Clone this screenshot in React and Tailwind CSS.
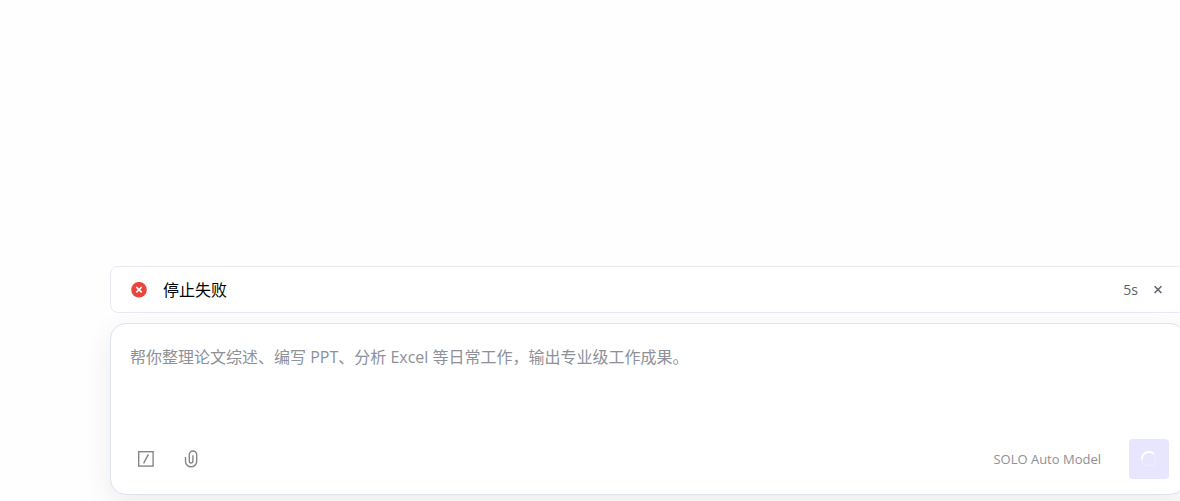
import { useState } from "react";

function ErrorIcon() {
  return (
    <svg viewBox="0 0 16 16" className="size-4" aria-hidden="true">
      <circle cx="8" cy="7.7" r="7.8" fill="#E8453C" />
      <path
        d="M5.3 5l5.4 5.4M10.7 5l-5.4 5.4"
        stroke="#fff"
        strokeWidth="1.7"
      />
    </svg>
  );
}

function CloseIcon() {
  return (
    <svg viewBox="0 0 16 16" className="size-4" aria-hidden="true">
      <path
        d="M4.6 4.2l6.8 6.8M11.4 4.2l-6.8 6.8"
        stroke="#5C5F6B"
        strokeWidth="1.5"
      />
    </svg>
  );
}

function CommandIcon() {
  return (
    <svg
      viewBox="0 0 20 20"
      className="size-5"
      fill="none"
      stroke="currentColor"
      strokeWidth="1.4"
      aria-hidden="true"
    >
      <rect x="2.7" y="2.7" width="14.4" height="14.4" />
      <path d="M12.4 5.4L7.6 14.4" />
    </svg>
  );
}

function AttachIcon() {
  return (
    <svg
      viewBox="0 0 20 20"
      className="size-5"
      fill="none"
      stroke="currentColor"
      strokeWidth="1.4"
      aria-hidden="true"
    >
      <path d="M4.5 8v4.2a5.6 5.6 0 0 0 11.2 0V5.7a3.7 3.7 0 0 0-7.4 0v6.6a1.8 1.8 0 0 0 3.6 0V6.2" />
    </svg>
  );
}

function Spinner() {
  return (
    <svg viewBox="0 0 16 16" className="size-4" fill="none" aria-hidden="true">
      <circle cx="8" cy="8" r="7" stroke="#EDEBFF" strokeWidth="1.5" />
      <path
        d="M1 8a7 7 0 0 1 11.5-5.4"
        stroke="#fff"
        strokeWidth="1.8"
        strokeLinecap="round"
      />
    </svg>
  );
}

function Toast({ onClose }) {
  return (
    <div
      role="alert"
      className="flex items-center rounded-lg border border-[#E8EAF3] bg-white pt-[11px] pr-[19px] pb-2.5 pl-5"
    >
      <ErrorIcon />
      <span className="ml-4 text-base leading-6 text-black">停止失败</span>
      <span className="ml-auto text-sm text-[#5C5F6B]">5s</span>
      <button type="button" aria-label="关闭" className="ml-3" onClick={onClose}>
        <CloseIcon />
      </button>
    </div>
  );
}

function Composer() {
  const [text, setText] = useState("");

  return (
    <form
      className="rounded-2xl border border-[#DFE2F0] bg-white pt-5 pr-4 pb-[15px] pl-[19px] shadow-[0_8px_28px_rgba(0,0,0,0.08)]"
      onSubmit={(e) => e.preventDefault()}
    >
      <textarea
        aria-label="任务描述"
        value={text}
        onChange={(e) => setText(e.target.value)}
        placeholder="帮你整理论文综述、编写 PPT、分析 Excel 等日常工作，输出专业级工作成果。"
        className="block h-[95px] w-full resize-none text-base leading-[26px] text-gray-800 outline-none placeholder:text-[#8D9199]"
      />
      <div className="flex items-center text-[#858585]">
        <button type="button" aria-label="命令" className="ml-1.5">
          <CommandIcon />
        </button>
        <button type="button" aria-label="添加附件" className="ml-[25px]">
          <AttachIcon />
        </button>
        <button type="button" className="ml-auto pt-0.5 text-[13px] text-[#909090]">
          SOLO Auto Model
        </button>
        <button
          type="submit"
          aria-label="发送"
          className="ml-7 flex size-10 items-center justify-center rounded-sm bg-[#E8E5FF]"
        >
          <Spinner />
        </button>
      </div>
    </form>
  );
}

export default function App() {
  const [showToast, setShowToast] = useState(true);

  return (
    <main className="flex min-h-screen flex-col justify-end overflow-hidden bg-[#FEFEFE] pb-1.5 pl-[110px] font-['Open_Sans','Noto_Sans_CJK_SC',sans-serif]">
      <div className="-mr-1.5 flex flex-col gap-2.5">
        {showToast && <Toast onClose={() => setShowToast(false)} />}
        <Composer />
      </div>
    </main>
  );
}
